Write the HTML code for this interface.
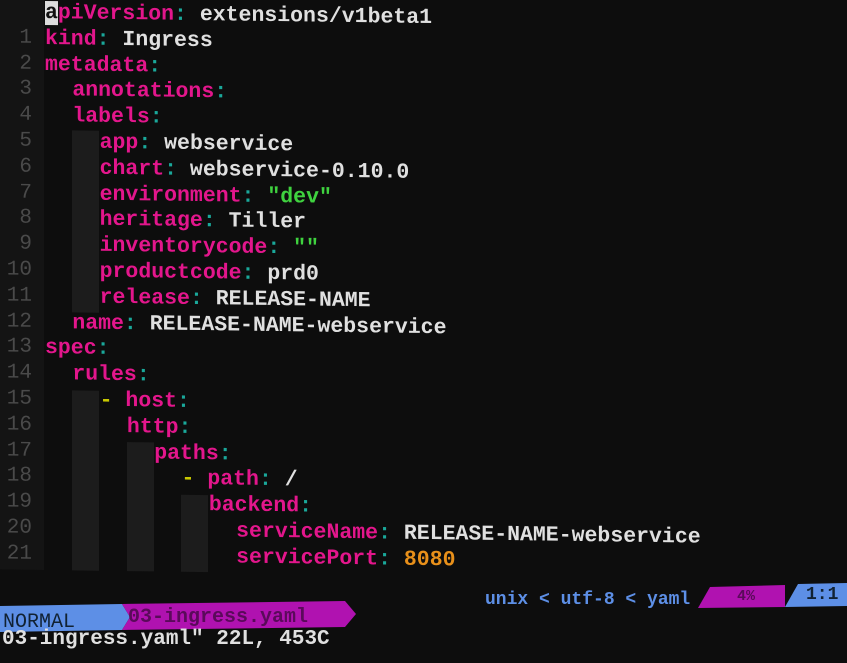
<!DOCTYPE html>
<html><head><meta charset="utf-8"><style>
body{margin:0;width:847px;height:663px;background:#0d0d0d;overflow:hidden;position:relative;font-family:"Liberation Mono",monospace;}
#ed{position:absolute;left:0;top:0;width:847px;height:580px;transform:skewY(0.75deg);transform-origin:45px 0;}
.gut{position:absolute;left:0;top:0;width:44px;height:570px;background:#141414;}
.l{position:absolute;left:45px;height:26px;line-height:26px;font-size:21.5px;white-space:pre;color:#e0e0e0;font-weight:bold;}
.l i{font-style:normal;letter-spacing:0.75px}
.n{position:absolute;left:0;width:32px;text-align:right;height:26px;line-height:26px;font-size:21px;color:#4a4a4a;}
.k{color:#e3168c}.c{color:#1aa89a}.g{color:#3fd23f}.o{color:#e8901a}.y{color:#c8c800}
.cur{background:#ddd;color:#111}
.ig{position:absolute;background:#1c1c1c;width:27px;}
.sl{position:absolute;font-family:"Liberation Mono",monospace;font-size:20px;line-height:26px;white-space:pre;font-weight:bold;}
</style></head><body>
<div id="ed">
<div class="gut"></div>
<div class="ig" style="left:72px;top:130px;height:182px"></div>
<div class="ig" style="left:72px;top:390px;height:180px"></div>
<div class="ig" style="left:127px;top:441px;height:129px"></div>
<div class="ig" style="left:181px;top:493px;height:77px"></div>
<div class="l" style="top:0px"><span class="cur">a</span><span class="k">piVersion</span><span class="c">:</span> extensions/v1beta1</div>
<div class="n" style="top:26px">1</div><div class="l" style="top:26px"><span class="k">kind</span><span class="c">:</span> Ingress</div>
<div class="n" style="top:52px">2</div><div class="l" style="top:52px"><span class="k">metadata</span><span class="c">:</span></div>
<div class="n" style="top:77px">3</div><div class="l" style="top:77px"><i>  </i><span class="k">annotations</span><span class="c">:</span></div>
<div class="n" style="top:103px">4</div><div class="l" style="top:103px"><i>  </i><span class="k">labels</span><span class="c">:</span></div>
<div class="n" style="top:129px">5</div><div class="l" style="top:129px"><i>    </i><span class="k">app</span><span class="c">:</span> webservice</div>
<div class="n" style="top:155px">6</div><div class="l" style="top:155px"><i>    </i><span class="k">chart</span><span class="c">:</span> webservice-0.10.0</div>
<div class="n" style="top:181px">7</div><div class="l" style="top:181px"><i>    </i><span class="k">environment</span><span class="c">:</span> <span class="g">"dev"</span></div>
<div class="n" style="top:206px">8</div><div class="l" style="top:206px"><i>    </i><span class="k">heritage</span><span class="c">:</span> Tiller</div>
<div class="n" style="top:232px">9</div><div class="l" style="top:232px"><i>    </i><span class="k">inventorycode</span><span class="c">:</span> <span class="g">""</span></div>
<div class="n" style="top:258px">10</div><div class="l" style="top:258px"><i>    </i><span class="k">productcode</span><span class="c">:</span> prd0</div>
<div class="n" style="top:284px">11</div><div class="l" style="top:284px"><i>    </i><span class="k">release</span><span class="c">:</span> RELEASE-NAME</div>
<div class="n" style="top:310px">12</div><div class="l" style="top:310px"><i>  </i><span class="k">name</span><span class="c">:</span> RELEASE-NAME-webservice</div>
<div class="n" style="top:335px">13</div><div class="l" style="top:335px"><span class="k">spec</span><span class="c">:</span></div>
<div class="n" style="top:361px">14</div><div class="l" style="top:361px"><i>  </i><span class="k">rules</span><span class="c">:</span></div>
<div class="n" style="top:387px">15</div><div class="l" style="top:387px"><i>    </i><span class="y">-</span> <span class="k">host</span><span class="c">:</span></div>
<div class="n" style="top:413px">16</div><div class="l" style="top:413px"><i>      </i><span class="k">http</span><span class="c">:</span></div>
<div class="n" style="top:439px">17</div><div class="l" style="top:439px"><i>        </i><span class="k">paths</span><span class="c">:</span></div>
<div class="n" style="top:464px">18</div><div class="l" style="top:464px"><i>          </i><span class="y">-</span> <span class="k">path</span><span class="c">:</span> /</div>
<div class="n" style="top:490px">19</div><div class="l" style="top:490px"><i>            </i><span class="k">backend</span><span class="c">:</span></div>
<div class="n" style="top:516px">20</div><div class="l" style="top:516px"><i>              </i><span class="k">serviceName</span><span class="c">:</span> RELEASE-NAME-webservice</div>
<div class="n" style="top:542px">21</div><div class="l" style="top:542px"><i>              </i><span class="k">servicePort</span><span class="c">:</span> <span class="o">8080</span></div>
</div>
<svg style="position:absolute;left:0;top:580px" width="847" height="60">
<polygon points="0,26 122,24 130,37 122,50 0,52" fill="#5d8fe6"/>
<polygon points="122,24 345,21 356,34 345,47 122,50 130,37" fill="#b012b0"/>
<polygon points="710,7 785,5 785,27 698,28" fill="#b012b0"/>
<polygon points="798,4 847,3 847,26 785,27" fill="#5d8fe6"/>
</svg>
<div class="sl" style="left:3px;top:610px;color:#123;font-size:20px;font-weight:normal">NORMAL</div>
<div class="sl" style="left:128px;top:605px;color:#5a0a5a;font-size:20px">03-ingress.yaml</div>
<div class="sl" style="left:485px;top:587px;color:#5d8fe6;font-size:18px">unix &lt; utf-8 &lt; yaml</div>
<div class="sl" style="left:737px;top:584px;color:#5a0a5a;font-size:15px">4%</div>
<div class="sl" style="left:806px;top:582px;color:#123;font-size:18px">1:1</div>
<div class="sl" style="left:2px;top:627px;color:#e0e0e0;font-size:21px">03-ingress.yaml" 22L, 453C</div>
</body></html>
